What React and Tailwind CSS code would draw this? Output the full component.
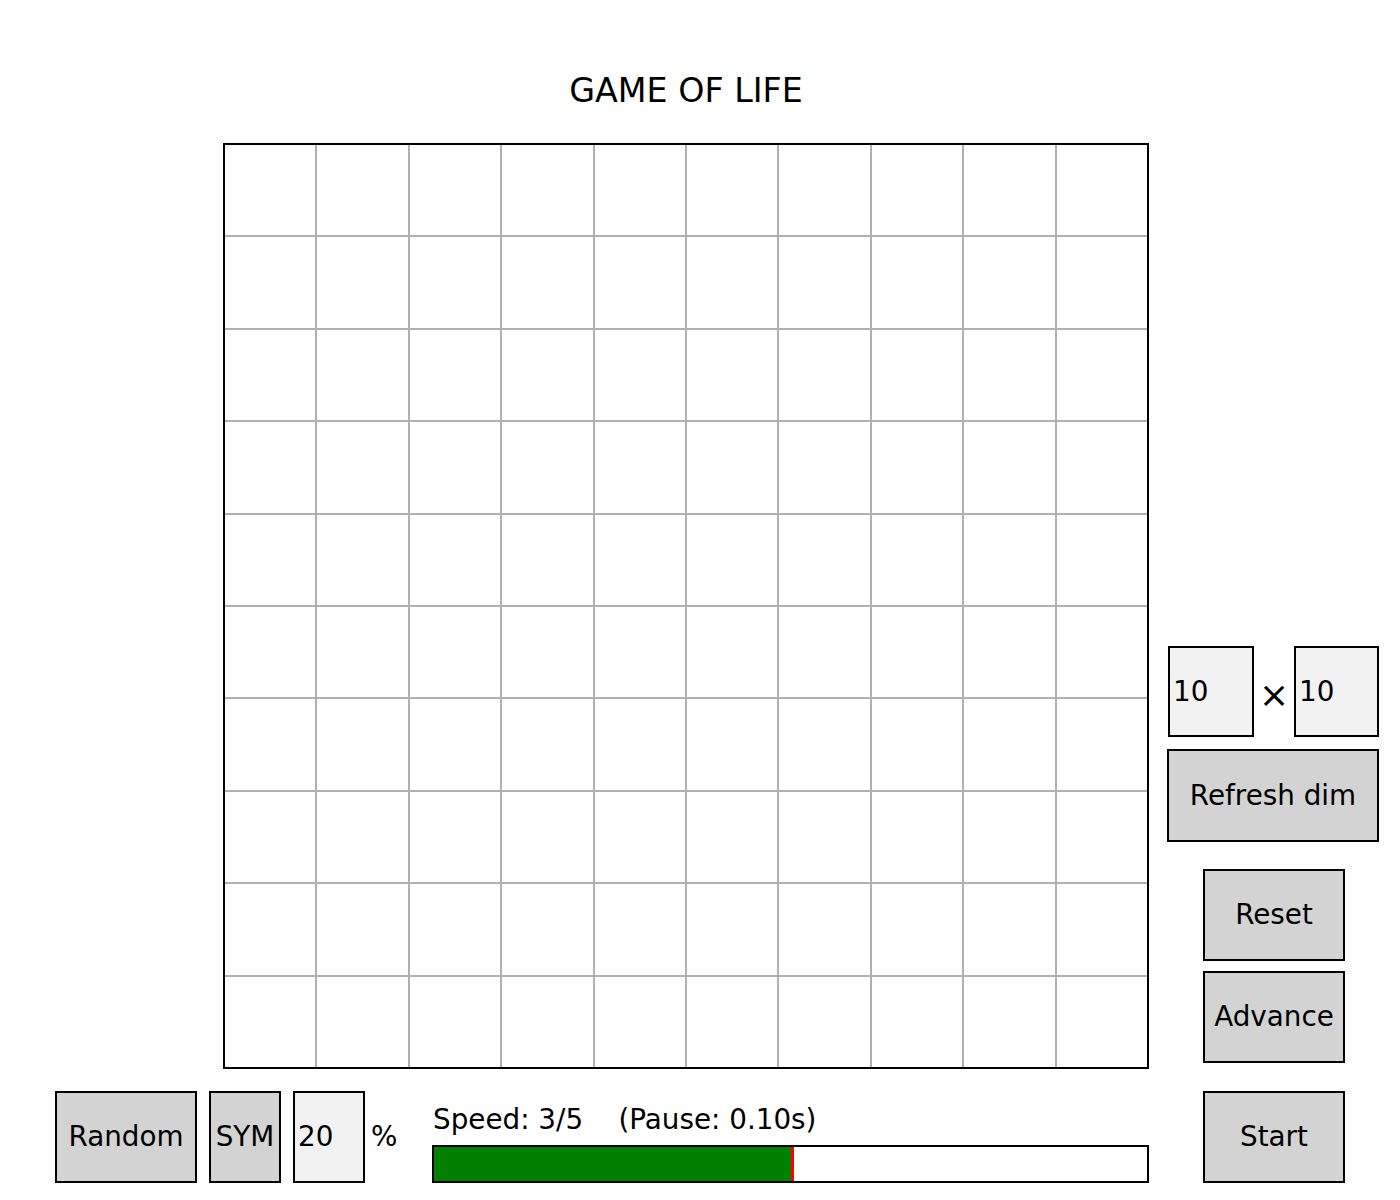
import React from "react";

const font = { fontFamily: '"DejaVu Sans", "Liberation Sans", sans-serif' };

function Btn({ label, className }) {
  return (
    <div
      className={
        "flex items-center justify-center border-2 border-black bg-[#d3d3d3] text-[27.8px] leading-[32px] text-black " +
        className
      }
    >
      {label}
    </div>
  );
}

function Input({ value, className }) {
  return (
    <div
      className={
        "flex items-center border-2 border-black bg-[#f2f2f2] pl-[3px] text-[27.8px] leading-[32px] text-black " +
        className
      }
    >
      {value}
    </div>
  );
}

export default function App() {
  const cells = Array.from({ length: 100 });
  const frac = 0.5;
  return (
    <div className="w-[1400px] h-[1200px] bg-white text-black flex flex-col" style={font}>
      {/* Title */}
      <div className="ml-[223px] w-[926px] pt-[71px] text-center text-[33.3px] leading-[40px]">
        GAME OF LIFE
      </div>

      {/* Main row */}
      <div className="mt-[32px] flex">
        <div className="ml-[223px] w-[926px] h-[926px] border-2 border-black bg-[#b0b0b0]">
          <div className="grid grid-cols-10 grid-rows-10 gap-[2px] w-full h-full">
            {cells.map((_, i) => (
              <div key={i} className="bg-white" />
            ))}
          </div>
        </div>

        <div className="ml-[18px] w-[212px] flex flex-col justify-end pb-[6px]">
          <div className="flex h-[91px]">
            <Input value="10" className="ml-[1px] w-[86px] h-[91px]" />
            <div className="w-[40px] flex items-center justify-center pt-[6px] text-[36px] leading-[40px]">
              ×
            </div>
            <Input value="10" className="w-[85px] h-[91px]" />
          </div>
          <Btn label="Refresh dim" className="mt-[12px] w-[212px] h-[93px]" />
          <Btn label="Reset" className="mt-[27px] ml-[36px] w-[142px] h-[92px]" />
          <Btn label="Advance" className="mt-[10px] ml-[36px] w-[142px] h-[92px]" />
        </div>
      </div>

      {/* Bottom row */}
      <div className="mt-[22px] flex h-[92px]">
        <Btn label="Random" className="ml-[55px] w-[142px] h-[92px]" />
        <Btn label="SYM" className="ml-[12px] w-[72px] h-[92px]" />
        <Input value="20" className="ml-[12px] w-[72px] h-[92px]" />
        <div className="w-[67px] h-[92px] flex items-center pl-[6px] text-[27.8px] leading-[32px]">%</div>
        <div className="w-[717px] h-[92px] flex flex-col justify-end">
          <div className="pl-[1px] text-[27.8px] leading-[32px] whitespace-pre">
            {"Speed: 3/5    (Pause: 0.10s)"}
          </div>
          <div className="mt-[9px] h-[38px] border-2 border-black bg-white flex">
            <div className="h-full bg-[#008000]" style={{ width: `${frac * 100}%` }} />
            <div className="h-full w-[3px] bg-[#ff0000]" />
          </div>
        </div>
        <Btn label="Start" className="ml-[54px] w-[142px] h-[92px]" />
      </div>
    </div>
  );
}
